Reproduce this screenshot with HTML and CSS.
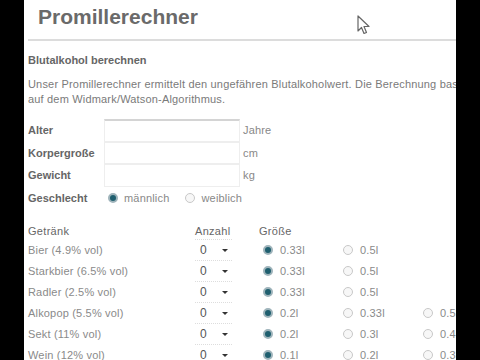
FILE: index.html
```html
<!DOCTYPE html>
<html lang="de">
<head>
    <meta charset="UTF-8">
    <title>Promillerechner</title>
    <link rel="stylesheet" href="styles.css">
</head>
<body>
    <div class="screen">
        <div class="page">
            <h1 class="title">Promillerechner</h1>
            <h3 class="sub">Blutalkohol berechnen</h3>
            <p class="intro">Unser Promillerechner ermittelt den ungefähren Blutalkoholwert. Die Berechnung basiert auf dem Widmark/Watson-Algorithmus.</p>

            <div class="person">
                <label class="lbl">Alter</label>
                <div class="field first"></div>
                <span class="unit">Jahre</span>

                <label class="lbl">Korpergroße</label>
                <div class="field"></div>
                <span class="unit">cm</span>

                <label class="lbl">Gewicht</label>
                <div class="field"></div>
                <span class="unit">kg</span>

                <label class="lbl">Geschlecht</label>
                <div class="sex">
                    <span class="radio on"></span><span class="opt">männlich</span>
                    <span class="radio"></span><span class="opt">weiblich</span>
                </div>
                <span></span>
            </div>

            <div class="drinks">
                <div class="head">Getränk</div>
                <div class="head">Anzahl</div>
                <div class="head size">Größe</div>

                <div class="name">Bier (4.9% vol)</div>
                <div class="count">0 <span class="arrow"></span></div>
                <div class="sz"><span class="radio on"></span>0.33l</div>
                <div class="sz"><span class="radio"></span>0.5l</div>
                <div class="sz"></div>

                <div class="name">Starkbier (6.5% vol)</div>
                <div class="count">0 <span class="arrow"></span></div>
                <div class="sz"><span class="radio on"></span>0.33l</div>
                <div class="sz"><span class="radio"></span>0.5l</div>
                <div class="sz"></div>

                <div class="name">Radler (2.5% vol)</div>
                <div class="count">0 <span class="arrow"></span></div>
                <div class="sz"><span class="radio on"></span>0.33l</div>
                <div class="sz"><span class="radio"></span>0.5l</div>
                <div class="sz"></div>

                <div class="name">Alkopop (5.5% vol)</div>
                <div class="count">0 <span class="arrow"></span></div>
                <div class="sz"><span class="radio on"></span>0.2l</div>
                <div class="sz"><span class="radio"></span>0.33l</div>
                <div class="sz"><span class="radio"></span>0.5l</div>

                <div class="name">Sekt (11% vol)</div>
                <div class="count">0 <span class="arrow"></span></div>
                <div class="sz"><span class="radio on"></span>0.2l</div>
                <div class="sz"><span class="radio"></span>0.3l</div>
                <div class="sz"><span class="radio"></span>0.4l</div>

                <div class="name">Wein (12% vol)</div>
                <div class="count">0 <span class="arrow"></span></div>
                <div class="sz"><span class="radio on"></span>0.1l</div>
                <div class="sz"><span class="radio"></span>0.2l</div>
                <div class="sz"><span class="radio"></span>0.3l</div>
            </div>
        </div>

        <svg class="cursor" width="14" height="20" viewBox="0 0 14 20">
            <path d="M1 1 L1 16 L4.5 12.5 L7 18.5 L9.5 17.5 L7 11.5 L12 11.5 Z" fill="#fff" stroke="#666" stroke-width="1.2" stroke-linejoin="round"/>
        </svg>
    </div>
</body>
</html>
```

FILE: styles.css
```css
body {
    margin: 0;
    background: #000;
    font-family: "Liberation Sans", Arial, sans-serif;
}
.screen {
    position: relative;
    margin-left: 24px;
    width: 432px;
    height: 360px;
    background: #fff;
    overflow: hidden;
}
.page {
    width: 470px;
    padding-left: 4px;
    letter-spacing: 0.18px;
}
.title {
    margin: 0;
    padding: 5px 0 0 10px;
    height: 34px;
    font-size: 21px;
    letter-spacing: 0;
    color: #6a6a6a;
    border-bottom: 2px solid #dcdcdc;
}
.sub {
    margin: 0;
    padding-top: 13px;
    font-size: 11px;
    letter-spacing: 0;
    color: #666;
}
.intro {
    width: 462px;
    margin: 11px 0 0;
    font-size: 11px;
    line-height: 15px;
    color: #7a7a7a;
}
.person {
    display: grid;
    grid-template-columns: 76px 136px auto;
    grid-auto-rows: 22.5px;
    margin-top: 12px;
    align-items: center;
}
.lbl {
    font-size: 11px;
    font-weight: bold;
    letter-spacing: 0;
    color: #666;
}
.field {
    border: 1px solid #eeeeee;
    box-sizing: border-box;
    align-self: stretch;
}
.field.first {
    border-top: 2px solid #d4d4d4;
}
.unit {
    padding-left: 3px;
    font-size: 11px;
    color: #888;
}
.sex {
    display: flex;
    align-items: center;
    font-size: 11px;
    color: #888;
}
.sex .radio {
    margin-left: 4px;
}
.opt {
    margin-left: 6px;
    margin-right: 12px;
}
.radio {
    display: inline-block;
    flex-shrink: 0;
    width: 10px;
    height: 10px;
    box-sizing: border-box;
    border-radius: 50%;
    border: 1px solid #c8c8c8;
    background: #f7f7f7;
}
.radio.on {
    border: 2px solid #9fb4bb;
    background: #1f5f6f;
}
.drinks {
    display: grid;
    grid-template-columns: 167px 64px 80px 80px 80px;
    grid-template-rows: 16px;
    grid-auto-rows: 21px;
    margin-top: 14px;
    align-items: center;
    font-size: 11px;
    color: #8a8a8a;
}
.head {
    color: #666;
    letter-spacing: 0.3px;
}
.head.size {
    grid-column: span 3;
}
.count {
    width: 37px;
    height: 21px;
    box-sizing: border-box;
    padding-left: 5px;
    display: flex;
    align-items: center;
    border-top: 1px dotted #ddd;
    font-size: 12px;
    color: #555;
}
.arrow {
    margin-left: 15px;
    width: 0;
    height: 0;
    border-left: 3px solid transparent;
    border-right: 3px solid transparent;
    border-top: 3px solid #333;
}
.sz {
    display: flex;
    align-items: center;
}
.sz .radio {
    margin-left: 4px;
    margin-right: 7px;
}
.cursor {
    position: absolute;
    left: 333px;
    top: 15px;
}
```
